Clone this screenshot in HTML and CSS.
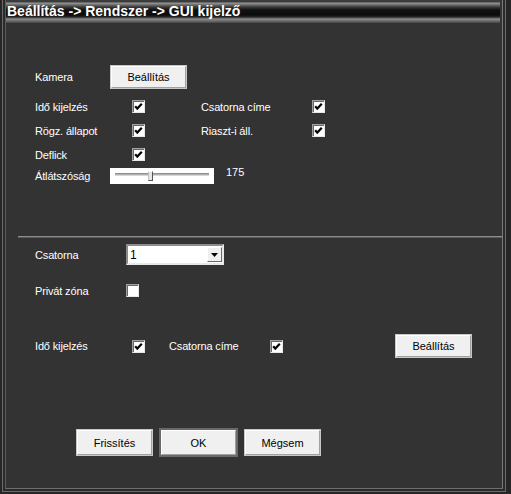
FILE: index.html
```html
<!DOCTYPE html>
<html lang="hu">
<head>
    <meta charset="UTF-8">
    <title>GUI kijelző</title>
    <link rel="stylesheet" href="styles.css">
</head>
<body>
<div class="window">
  <div class="outer">
    <div class="panel">
      <div class="titlebar">Beállítás -&gt; Rendszer -&gt; GUI kijelző</div>

      <div class="content">
        <!-- Kamera -->
        <div class="row row-camera">
          <span class="label w76">Kamera</span>
          <button class="btn">Beállítás</button>
        </div>

        <div class="row row-check first">
          <span class="label w97">Idő kijelzés</span>
          <span class="check"><svg viewBox="0 0 11 11"><path d="M2.2 5.2 L4.3 7.6 L8.8 2.8"/></svg></span>
          <span class="label w111 gap56">Csatorna címe</span>
          <span class="check"><svg viewBox="0 0 11 11"><path d="M2.2 5.2 L4.3 7.6 L8.8 2.8"/></svg></span>
        </div>

        <div class="row row-check">
          <span class="label w97">Rögz. állapot</span>
          <span class="check"><svg viewBox="0 0 11 11"><path d="M2.2 5.2 L4.3 7.6 L8.8 2.8"/></svg></span>
          <span class="label w111 gap56">Riaszt-i áll.</span>
          <span class="check"><svg viewBox="0 0 11 11"><path d="M2.2 5.2 L4.3 7.6 L8.8 2.8"/></svg></span>
        </div>

        <div class="row row-check">
          <span class="label w97">Deflick</span>
          <span class="check"><svg viewBox="0 0 11 11"><path d="M2.2 5.2 L4.3 7.6 L8.8 2.8"/></svg></span>
        </div>

        <div class="row row-slider">
          <span class="label w75">Átlátszóság</span>
          <div class="slider">
            <div class="track"></div>
            <div class="thumb" style="left: 38px;"></div>
          </div>
          <span class="value">175</span>
        </div>

        <div class="separator"></div>

        <!-- Csatorna beállítások -->
        <div class="row row-select">
          <span class="label w91">Csatorna</span>
          <div class="select">
            <span class="select-text">1</span>
            <span class="select-btn"><svg viewBox="0 0 7 4"><path d="M0 0 H7 L3.5 4 Z"/></svg></span>
          </div>
        </div>

        <div class="row row-private">
          <span class="label w91">Privát zóna</span>
          <span class="check empty"></span>
        </div>

        <div class="row row-channel">
          <span class="label w97">Idő kijelzés</span>
          <span class="check"><svg viewBox="0 0 11 11"><path d="M2.2 5.2 L4.3 7.6 L8.8 2.8"/></svg></span>
          <span class="label w101 gap24">Csatorna címe</span>
          <span class="check"><svg viewBox="0 0 11 11"><path d="M2.2 5.2 L4.3 7.6 L8.8 2.8"/></svg></span>
          <button class="btn gap113">Beállítás</button>
        </div>

        <div class="actions">
          <button class="btn big">Frissítés</button>
          <button class="btn big default">OK</button>
          <button class="btn big">Mégsem</button>
        </div>
      </div>
    </div>
  </div>
</div>
</body>
</html>
```

FILE: styles.css
```css
html, body {
    margin: 0;
    padding: 0;
}
body {
    background-color: #262626;
    font-family: "Liberation Sans", Arial, sans-serif;
    font-size: 11px;
    color: #fff;
}
.window {
    width: 511px;
    height: 494px;
    box-sizing: border-box;
    padding: 0 5px 2px 2px;
    background-color: #262626;
    display: flex;
}
.outer {
    flex: 1;
    display: flex;
    border-left: 1px solid #6b6b6b;
    border-right: 1px solid #6b6b6b;
    border-bottom: 1px solid #6b6b6b;
    padding: 0 2px 2px 2px;
    background-color: #2a2a2a;
}
.panel {
    flex: 1;
    border-left: 1px solid #5c5c5c;
    border-right: 1px solid #7a7a7a;
    border-bottom: 1px solid #6e6e6e;
    background-color: #333;
    overflow: hidden;
}
.titlebar {
    height: 23px;
    line-height: 23px;
    margin-right: 2px;
    padding-left: 1px;
    font-size: 14px;
    font-weight: bold;
    color: #fff;
    white-space: nowrap;
    background: linear-gradient(to bottom,
        #3c3c3c 0px, #3c3c3c 2px, #9a9a9a 3px, #808080 4px,
        #3a3a3a 7px, #101010 10px, #0c0c0c 15px, #262626 17px,
        #8c8c8c 19px, #6c6c6c 21px, #444 23px);
}
.content {
    padding-left: 29px;
}
.row {
    display: flex;
    align-items: center;
}
.label {
    flex: none;
    white-space: nowrap;
    letter-spacing: -0.15px;
}
.w75 { width: 75px; }
.w76 { width: 76px; }
.w91 { width: 91px; }
.w97 { width: 97px; }
.w101 { width: 101px; }
.w111 { width: 111px; }
.gap24 { margin-left: 24px; }
.gap56 { margin-left: 56px; }
.gap113 { margin-left: 113px; }

.row-camera {
    margin-top: 43px;
    height: 22px;
}
.row-check {
    margin-top: 11px;
    height: 13px;
}
.row-check.first {
    margin-top: 12px;
}
.row-slider {
    margin-top: 7px;
    height: 16px;
}
.row-select {
    margin-top: 6px;
    height: 21px;
}
.row-private {
    margin-top: 19px;
    height: 13px;
}
.row-channel {
    margin-top: 38px;
    height: 22px;
}

/* buttons */
.btn {
    flex: none;
    width: 75px;
    height: 22px;
    padding: 0;
    font-family: "Liberation Sans", Arial, sans-serif;
    font-size: 11px;
    color: #000;
    background-color: #f0f0f0;
    border: 1px solid;
    border-color: #fff #a0a0a0 #a0a0a0 #fff;
    box-shadow: 0 0 0 1px #c8c8c8;
    border-radius: 0;
}
.btn.big {
    height: 25px;
}
.btn.default {
    box-shadow: 0 0 0 2px #6a6a6a;
}
.actions {
    display: flex;
    gap: 9px;
    margin-top: 73px;
    margin-left: 42px;
}

/* checkbox */
.check {
    flex: none;
    width: 11px;
    height: 11px;
    background-color: #fff;
    border: 1px solid;
    border-color: #a0a0a0 #e8e8e8 #e8e8e8 #a0a0a0;
    box-shadow: inset 1px 1px 0 #696969;
    display: flex;
}
.check svg {
    width: 11px;
    height: 11px;
}
.check path {
    fill: none;
    stroke: #000;
    stroke-width: 2.2;
}

/* slider */
.slider {
    position: relative;
    flex: none;
    width: 104px;
    height: 16px;
    background-color: #fff;
}
.track {
    position: absolute;
    left: 5px;
    right: 5px;
    top: 5px;
    height: 1px;
    border-top: 1px solid #909090;
    border-bottom: 1px solid #d8d8d8;
    background-color: #b0b0b0;
}
.thumb {
    position: absolute;
    top: 3px;
    width: 3px;
    height: 8px;
    background-color: #e6e6e6;
    border: 1px solid;
    border-color: #fff #555 #555 #c0c0c0;
}
.value {
    margin-left: 12px;
    margin-top: -8px;
}

.separator {
    margin-top: 52px;
    margin-left: -17px;
    height: 1px;
    border-bottom: 1px solid #5a5a5a;
    background-color: #8c8c8c;
}

/* select */
.select {
    flex: none;
    width: 94px;
    height: 17px;
    background-color: #fff;
    border: 2px solid;
    border-color: #8c8c8c #e8e8e8 #e8e8e8 #8c8c8c;
    display: flex;
    align-items: center;
    justify-content: space-between;
    color: #000;
}
.select-text {
    padding-left: 2px;
    font-size: 12px;
}
.select-btn {
    width: 15px;
    height: 15px;
    margin-right: 0;
    box-sizing: border-box;
    background-color: #f0f0f0;
    border: 1px solid;
    border-color: #fff #696969 #696969 #fff;
    display: flex;
    align-items: center;
    justify-content: center;
}
.select-btn svg {
    width: 7px;
    height: 4px;
}
```
